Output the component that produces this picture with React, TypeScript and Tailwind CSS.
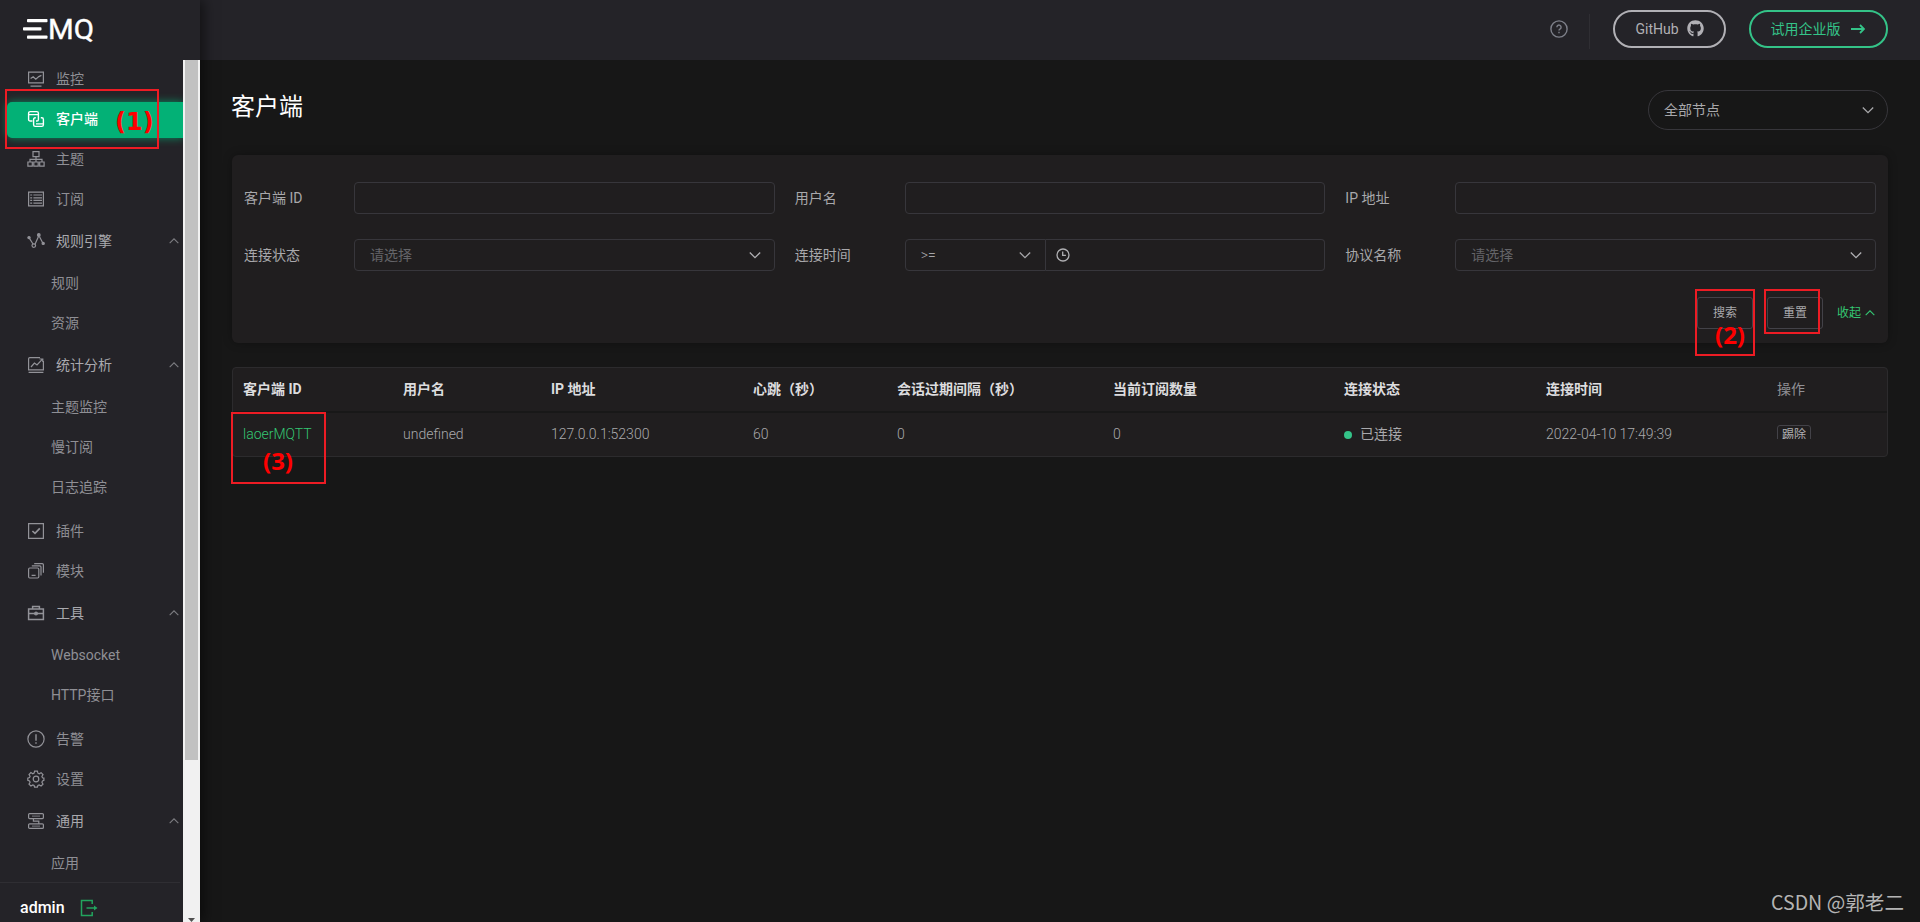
import type { ReactNode } from "react";
import { clsx } from "clsx";
import { FaGithub } from "react-icons/fa";

type MenuEntry = {
  label: string;
  icon: ReactNode;
  active?: boolean;
  children?: string[];
};

const Icon = ({ children }: { children: ReactNode }) => (
  <svg
    width="18"
    height="18"
    viewBox="0 0 18 18"
    fill="none"
    stroke="currentColor"
    strokeWidth="1.2"
    className="shrink-0"
  >
    {children}
  </svg>
);

const menu: MenuEntry[] = [
  {
    label: "监控",
    icon: (
      <Icon>
        <path d="M1.6 2.1h14.8v10.8H1.6zM3.5 16.2h11M3.6 8.6l2.6-1.8 2.6 2.4 3-2.6 2.6-1.2" />
      </Icon>
    ),
  },
  {
    label: "客户端",
    active: true,
    icon: (
      <Icon>
        <path
          strokeWidth="1.4"
          d="M5.4 11H3.2a1.6 1.6 0 0 1-1.6-1.6V3.2a1.6 1.6 0 0 1 1.6-1.6h6.6a1.6 1.6 0 0 1 1.6 1.6v6.200a1.6 1.6 0 0 1-1.6 1.6H9M1.6 4.600h9.800M8.800 7.800H8.200a1.6 1.6 0 0 0-1.6 1.6v5.400a1.6 1.6 0 0 0 1.6 1.6h6.600a1.6 1.6 0 0 0 1.600-1.600V9.400a1.6 1.6 0 0 0-1.600-1.600h-1M9 13.900h7"
        />
      </Icon>
    ),
  },
  {
    label: "主题",
    icon: (
      <Icon>
        <path d="M6 1.6h6v5H6zM9 6.6v2.8M3 11.8V9.4h12v2.4M9 9.4v2.4M.9 12h4.4v4.2H.9zM6.8 12h4.4v4.2H6.8zM12.7 12h4.4v4.2h-4.4z" />
      </Icon>
    ),
  },
  {
    label: "订阅",
    icon: (
      <Icon>
        <path d="M1.6 2.2h14.8v13.6H1.6zM3.2 5h2M6.4 5h8.6M3.2 7.8h2M6.4 7.8h8.6M3.2 10.4h2M6.4 10.4h8.6M3.2 13.2h2M6.4 13.2h8.6" />
      </Icon>
    ),
  },
  {
    label: "规则引擎",
    icon: (
      <Icon>
        <path d="M2.6 6.6l3.6 5.6M8 12.2l3.6-8M12.4 4.4l3.4 6.6" />
        <circle cx="2" cy="5.6" r="1.1" fill="currentColor" />
        <circle cx="6.8" cy="13.6" r="1.8" />
        <circle cx="11.8" cy="3" r="1.3" fill="currentColor" />
        <circle cx="16.2" cy="11.4" r="1.1" fill="currentColor" />
      </Icon>
    ),
    children: ["规则", "资源"],
  },
  {
    label: "统计分析",
    icon: (
      <Icon>
        <path d="M13 1.6H2.8a1.2 1.2 0 0 0-1.2 1.2v11h14.8V5M1.6 16.4h14.8M4 11l3.4-4 2.6 2 5-5.4M12.6 3h3.2v3" />
      </Icon>
    ),
    children: ["主题监控", "慢订阅", "日志追踪"],
  },
  {
    label: "插件",
    icon: (
      <Icon>
        <path d="M1.6 1.6h14.8v14.8H1.6z" />
        <path strokeWidth="1.7" d="M5.4 9l2.6 2.4 4.8-5" />
      </Icon>
    ),
  },
  {
    label: "模块",
    icon: (
      <Icon>
        <path d="M2.8 6h7.8a1.2 1.2 0 0 1 1.2 1.2v7.6a1.2 1.2 0 0 1-1.2 1.2H2.8a1.2 1.2 0 0 1-1.2-1.2V7.2A1.2 1.2 0 0 1 2.8 6zM4.6 13.4h4M4.8 3.8h8a1.2 1.2 0 0 1 1.2 1.2v8.4M7.2 1.6h8a1.2 1.2 0 0 1 1.2 1.2v8" />
      </Icon>
    ),
  },
  {
    label: "工具",
    icon: (
      <Icon>
        <path strokeWidth="1.5" d="M1.6 5h14.8v10.4H1.6zM5.6 5V2.4h6.8V5M1.6 9.4h14.8" />
        <circle cx="9" cy="9.6" r="1.4" fill="currentColor" />
      </Icon>
    ),
    children: ["Websocket", "HTTP接口"],
  },
  {
    label: "告警",
    icon: (
      <Icon>
        <circle cx="9" cy="9" r="8.1" />
        <path strokeWidth="1.4" d="M9 4.2v6.6M9 12.2v1.6" />
      </Icon>
    ),
  },
  {
    label: "设置",
    icon: (
      <Icon>
        <circle cx="9" cy="9" r="2.8" />
        <path d="M7.6 1.2h2.8l.5 2 1.3.6 1.9-1.1 1.9 1.9-1.1 1.9.6 1.3 1.4.3v2.3l-1.4.5-.6 1.3 1.1 1.9-1.9 1.9-1.9-1.1-1.3.6-.5 1.7H7.6l-.5-1.7-1.3-.6L3.9 16 2 14.1l1.1-1.9-.6-1.3-1.7-.5V8.1l1.7-.5.6-1.3L2 4.5l1.9-1.9 1.9 1.1 1.3-.6z" />
      </Icon>
    ),
  },
  {
    label: "通用",
    icon: (
      <Icon>
        <path d="M2.6 1.6h12.8a1 1 0 0 1 1 1v3a1 1 0 0 1-1 1H2.600a1 1 0 0 1-1-1v-3a1 1 0 0 1 1-1zM2.600 11.800h12.800a1 1 0 0 1 1 1v2.600a1 1 0 0 1-1 1H2.600a1 1 0 0 1-1-1v-2.600a1 1 0 0 1 1-1zM6.400 6.600v2.600h5.400v2.600" />
        <path strokeWidth="0.8" d="M5 4.100h8M5 14.100h8" />
      </Icon>
    ),
    children: ["应用"],
  },
];

const columns = [
  { title: "客户端 ID", width: "w-[160px]" },
  { title: "用户名", width: "w-[148px]" },
  { title: "IP 地址", width: "w-[202px]" },
  { title: "心跳（秒）", width: "w-[144px]" },
  { title: "会话过期间隔（秒）", width: "w-[216px]" },
  { title: "当前订阅数量", width: "w-[231px]" },
  { title: "连接状态", width: "w-[202px]" },
  { title: "连接时间", width: "w-[231px]" },
  { title: "操作", width: "w-[120px]" },
];

const Chevron = ({ up, size = 12, className }: { up?: boolean; size?: number; className?: string }) => (
  <svg
    width={size}
    height={size}
    viewBox="0 0 12 12"
    fill="none"
    stroke="currentColor"
    strokeWidth="1.3"
    className={clsx("shrink-0", up && "rotate-180", className)}
  >
    <path d="M.8 3.5 6 8.7l5.2-5.2" />
  </svg>
);

const Sidebar = () => (
  <aside className="relative z-10 flex h-full w-[200px] shrink-0 flex-col bg-[#242328] shadow-[4px_0_12px_rgba(0,0,0,0.5)]">
    <div className="flex h-[60px] shrink-0 items-center pl-[23px]">
      <svg width="80" height="32" viewBox="0 -4 80 32" className="mt-[-2px]">
        <g fill="#fff">
          <rect x="4" y="2" width="20.5" height="3.2" rx="0.8" />
          <rect x="0" y="10.3" width="18.5" height="3.2" rx="0.8" />
          <rect x="4" y="18.5" width="20.5" height="3.2" rx="0.8" />
        </g>
        <text
          x="25"
          y="21.7"
          fill="#fff"
          fontSize="28"
          fontWeight="400"
          stroke="#fff"
          strokeWidth="0.4"
          textLength="46"
          lengthAdjust="spacingAndGlyphs"
          className="font-['Roboto',sans-serif]"
        >
          MQ
        </text>
      </svg>
    </div>
    <div className="flex min-h-0 flex-1">
      <nav className="flex min-w-0 flex-1 flex-col">
        <div className="-mt-px flex h-[823px] shrink-0 flex-col overflow-hidden">
          {menu.map((item, i) => (
            <div
              key={item.label}
              className={clsx("shrink-0", item.children && !menu[i + 1]?.children && "pb-1")}
            >
              {item.active ? (
                <div className="flex h-10 items-center pl-[7px]">
                  <div className="mt-[2px] flex h-9 flex-1 items-center rounded-l-[5px] bg-[#03b176] pb-[2px] pl-5 text-white shadow-[0_0_8px_rgba(3,177,118,0.75)]">
                    {item.icon}
                    <span className="ml-[11px] font-medium">{item.label}</span>
                  </div>
                </div>
              ) : (
                <div
                  className={clsx(
                    "flex items-center pl-[27px]",
                    item.children ? "h-11 text-[#a9a9ae]" : "h-10 text-[#8f8f95]",
                  )}
                >
                  <span className="text-[#929298]">{item.icon}</span>
                  <span className="ml-[11px]">{item.label}</span>
                  {item.children && (
                    <Chevron up size={10} className="mr-[4px] ml-auto text-[#7d7d82]" />
                  )}
                </div>
              )}
              {item.children?.map((child) => (
                <div key={child} className="flex h-10 items-center pl-[51px] text-[#8f8f95]">
                  {child}
                </div>
              ))}
            </div>
          ))}
        </div>
        <div className="mr-[3px] flex flex-1 items-center border-t border-[#2f2e33] pt-[10px] pl-5">
          <span className="text-base font-medium text-white">admin</span>
          <svg
            width="18"
            height="18"
            viewBox="0 0 18 18"
            fill="none"
            stroke="#22a45e"
            strokeWidth="1.5"
            className="ml-[15px]"
          >
            <path d="M12.2 5V1.5H1.5v15h10.7V13M6.5 9h9" />
            <path d="M14 6.4 17.5 9 14 11.6z" fill="#22a45e" stroke="none" />
          </svg>
        </div>
      </nav>
      <div className="flex w-[17px] shrink-0 flex-col items-center justify-between bg-[#f1f1f1]">
        <div className="h-[700px] w-[13px] bg-[#c1c1c1]" />
        <svg width="7" height="4" viewBox="0 0 7 4">
          <path d="M0 0h7L3.5 4z" fill="#505050" />
        </svg>
      </div>
    </div>
  </aside>
);

const Header = () => (
  <header className="flex h-[60px] shrink-0 items-center justify-end bg-[#242328] pr-8 pb-[2px]">
    <svg width="18" height="18" viewBox="0 0 18 18" fill="none" stroke="#7e808a" strokeWidth="1.4">
      <circle cx="9" cy="9" r="8.1" />
      <path d="M6.9 7.2a2.1 2.1 0 1 1 3.3 1.7c-.8.5-1.2.8-1.2 1.7M9 11.8v1.4" />
    </svg>
    <span className="mt-1 ml-[21px] h-[35px] w-px bg-[#2f2e33]" />
    <button className="ml-[23px] flex h-[38px] w-[113px] items-center justify-center gap-2 rounded-full border-2 border-[#b1b0b5] text-[#b1b0b5]">
      <span>GitHub</span>
      <FaGithub size={17} className="mb-[2px]" />
    </button>
    <button className="ml-[23px] flex h-[38px] w-[139px] items-center justify-center gap-[10px] rounded-full border-2 border-[#34c388] pr-[2px] text-[#34c388]">
      <span>试用企业版</span>
      <svg width="14" height="10" viewBox="0 0 14 10" fill="none" stroke="currentColor" strokeWidth="1.8">
        <path d="M0 5h13M9 1l4 4-4 4" />
      </svg>
    </button>
  </header>
);

const Field = ({ label, children }: { label: string; children: ReactNode }) => (
  <div className="flex h-8 items-center">
    <label className="mb-px w-[110px] shrink-0 text-[#a8a8ab]">{label}</label>
    {children}
  </div>
);

const TextInput = () => (
  <input className="h-8 w-full min-w-0 rounded border border-[#37363b] bg-transparent px-4 outline-none" />
);

const Select = () => (
  <div className="flex h-8 flex-1 items-center justify-between rounded border border-[#37363b] pr-[13px] pl-[15px] text-[#646468]">
    <span>请选择</span>
    <Chevron className="text-[#b0b0b3]" />
  </div>
);

const Filters = () => (
  <section className="flex h-[188px] flex-col rounded-md bg-[#201e1f] px-3 pt-[27px] shadow-[0_0_10px_rgba(0,0,0,0.3)]">
    <div className="grid grid-cols-3 gap-x-5 gap-y-[25px]">
      <Field label="客户端 ID">
        <TextInput />
      </Field>
      <Field label="用户名">
        <TextInput />
      </Field>
      <Field label="IP 地址">
        <TextInput />
      </Field>
      <Field label="连接状态">
        <Select />
      </Field>
      <Field label="连接时间">
        <div className="flex h-8 w-[141px] shrink-0 items-center justify-between rounded-l border border-[#37363b] pr-[14px] pl-[15px] text-[#a6a6a9]">
          <span className="font-light">&gt;=</span>
          <Chevron />
        </div>
        <div className="flex h-8 flex-1 items-center rounded-r border border-l-0 border-[#37363b] pl-[10px] text-[#b0b0b3]">
          <svg width="14" height="14" viewBox="0 0 14 14" fill="none" stroke="currentColor" strokeWidth="1.3">
            <circle cx="7" cy="7" r="6" />
            <path d="M6.7 3.4v4h3.2" />
          </svg>
        </div>
      </Field>
      <Field label="协议名称">
        <Select />
      </Field>
    </div>
    <div className="mt-[26px] flex items-center justify-end pr-px text-xs">
      <button className="h-8 w-14 rounded-[3px] border border-[#434248] text-[#a8a8ab]">搜索</button>
      <button className="ml-[14px] h-8 w-14 rounded-[3px] border border-[#434248] text-[#a8a8ab]">重置</button>
      <a className="ml-[14px] flex items-center gap-1 text-[#34c773]">
        收起
        <Chevron up size={10} />
      </a>
    </div>
  </section>
);

const ClientTable = () => (
  <table className="mt-6 w-full table-fixed border-separate border-spacing-0 rounded border border-[#2c2b2d] bg-[#201e1f] text-left">
    <thead>
      <tr className="h-[45px]">
        {columns.map((column) => (
          <th
            key={column.title}
            className={clsx(
              column.width,
              "border-b-2 border-[#181818] pb-[2px] pl-[10px] whitespace-nowrap",
              column.title === "操作" ? "font-normal text-[#909095]" : "font-bold text-[#dcdcde]",
            )}
          >
            {column.title}
          </th>
        ))}
      </tr>
    </thead>
    <tbody>
      <tr className="h-[43px] font-light text-[#a9a9ac]">
        <td className="pb-[2px] pl-[10px] text-[#34c773]">laoerMQTT</td>
        <td className="pb-[2px] pl-[10px]">undefined</td>
        <td className="pb-[2px] pl-[10px]">127.0.0.1:52300</td>
        <td className="pb-[2px] pl-[10px]">60</td>
        <td className="pb-[2px] pl-[10px]">0</td>
        <td className="pb-[2px] pl-[10px]">0</td>
        <td className="pb-[2px] pl-[10px]">
          <div className="flex items-center">
            <span className="mt-[3px] mr-2 size-2 rounded-full bg-[#34c388]" />
            <span className="font-normal text-[#a8a8ab]">已连接</span>
          </div>
        </td>
        <td className="pb-[2px] pl-[10px]">2022-04-10 17:49:39</td>
        <td className="pb-[2px] pl-[10px]">
          <div className="mt-[-5px] h-[15px] overflow-hidden">
            <button className="h-5 w-[34px] rounded-[3px] border border-[#434248] text-xs leading-[18px] font-normal text-[#b0b0b3]">
              踢除
            </button>
          </div>
        </td>
      </tr>
    </tbody>
  </table>
);

// red call-outs drawn over the finished page
const Annotations = () => (
  <div className="pointer-events-none font-['Noto_Sans',sans-serif] text-2xl leading-none font-bold text-[#ff0000]">
    <div className="absolute top-[89px] left-[5px] z-20 h-[60px] w-[154px] border-2 border-[#ed1c24]" />
    <span className="absolute top-[110px] left-[115px] z-20 font-['DejaVu_Sans',sans-serif]">(1)</span>
    <div className="absolute top-[289px] left-[1695px] z-20 h-[67px] w-[60px] border-2 border-[#ed1c24]" />
    <span className="absolute top-[323px] left-[1715px] z-20">(2)</span>
    <div className="absolute top-[289px] left-[1764px] z-20 h-[45px] w-14 border-2 border-[#ed1c24]" />
    <div className="absolute top-[412px] left-[231px] z-20 h-[72px] w-[95px] border-2 border-[#ed1c24]" />
    <span className="absolute top-[449px] left-[263px] z-20">(3)</span>
  </div>
);

const App = () => {
  return (
    <div className="relative flex h-[922px] w-[1920px] overflow-hidden bg-[#171717] font-['Roboto','Noto_Sans_CJK_SC',sans-serif] text-sm font-normal">
      <Sidebar />
      <div className="flex min-w-0 flex-1 flex-col">
        <Header />
        <main className="flex-1 px-8 pt-[30px]">
          <div className="mb-[25px] flex h-10 items-center justify-between">
            <h1 className="mb-[6px] -ml-px text-2xl font-normal text-white">客户端</h1>
            <div className="flex h-10 w-60 items-center justify-between rounded-full border border-[#37363b] pr-[13px] pl-[15px] text-[#a8a8ab]">
              <span>全部节点</span>
              <Chevron />
            </div>
          </div>
          <Filters />
          <ClientTable />
        </main>
      </div>
      <Annotations />
      <span className="absolute right-4 bottom-[6px] font-['Noto_Sans_CJK_SC',sans-serif] text-[19.6px] leading-7 text-[#b4b4b4]">
        CSDN @郭老二
      </span>
    </div>
  );
};

export default App;
